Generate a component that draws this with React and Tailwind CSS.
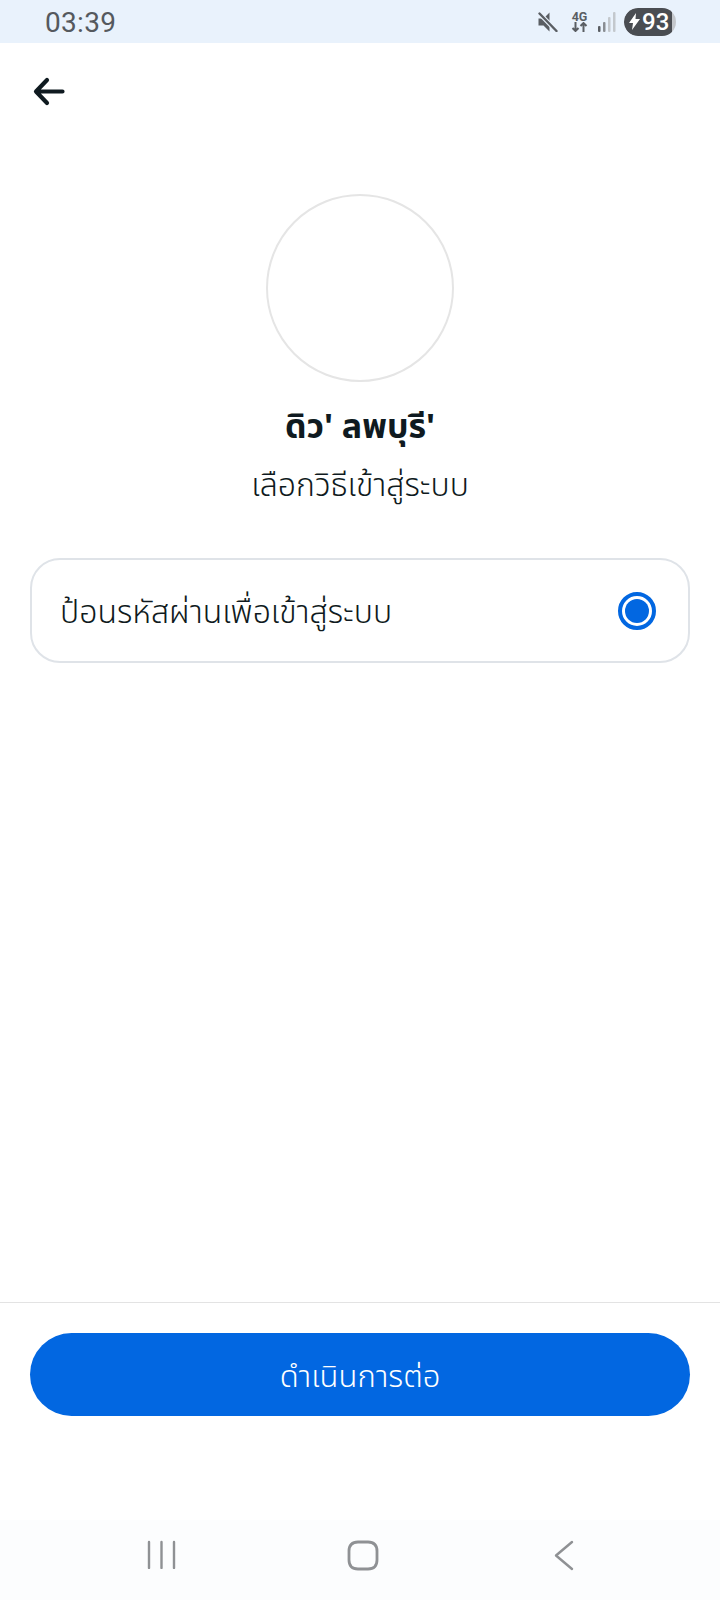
import React from 'react';

const thai = 'font-["Noto_Sans","Noto_Sans_Thai","Liberation_Sans",sans-serif]';

const StatusBar = () => (
  <div className="h-[43px] bg-[#e9f2fc] flex items-center justify-between pl-[45px] pr-[44px] shrink-0">
    <span className='font-["Roboto",sans-serif] text-[28px] leading-none tracking-[0.3px] text-[#55595e] mt-[3px]'>03:39</span>
    <div className="flex items-center">
      {/* mute */}
      <svg width="20" height="20" viewBox="0 0 20 20" fill="#5a5e63">
        <path d="M0.500 6.500h5l6-6v19l-6-6h-5z" />
        <path d="M1.500 1.500 18.500 19" stroke="#e9f2fc" strokeWidth="4.500" />
        <path d="M1.500 1.500 18.500 19" stroke="#5a5e63" strokeWidth="2.400" strokeLinecap="round" />
      </svg>
      {/* 4G */}
      <div className="ml-[13px] w-[17px] flex flex-col items-center text-[#5a5e63]">
        <span className='font-["Roboto",sans-serif] font-bold text-[12.500px] leading-[11px]'>4G</span>
        <svg width="17" height="10" viewBox="0 0 17 10" fill="none" stroke="#5a5e63" strokeWidth="2">
          <path d="M4.500 0v9M1.500 6l3 3 3-3" />
          <path d="M12.500 10V1M9.500 4l3-3 3 3" />
        </svg>
      </div>
      {/* signal */}
      <svg className="ml-[10px]" width="18" height="20" viewBox="0 0 18 20">
        <rect x="0" y="14" width="2.500" height="6" rx="1" fill="#5a5e63" />
        <rect x="5" y="10" width="2.500" height="10" rx="1" fill="#8a8e93" />
        <rect x="10" y="5" width="2.500" height="15" rx="1" fill="#c3c8cd" />
        <rect x="15" y="0" width="2.500" height="20" rx="1" fill="#c3c8cd" />
      </svg>
      {/* battery */}
      <div className="ml-[8px] relative w-[52px] h-[28px] rounded-full bg-[#c4c7cb] overflow-hidden">
        <div className="w-[48px] h-full rounded-l-full bg-[#4a4d52] flex items-center pl-[5px] gap-[2px]">
          <svg width="11" height="17" viewBox="0 0 11 17" fill="#fff">
            <path d="M7 0 0 10h4l-1 7 8-11H6.500z" />
          </svg>
          <span className='font-["Roboto",sans-serif] font-medium text-[24px] leading-none text-white'>93</span>
        </div>
      </div>
    </div>
  </div>
);

const NavBar = () => (
  <div className="h-[80px] bg-[#fcfdfe] shrink-0 relative">
    <div className="h-full flex items-start pt-[20px]">
      <svg className="ml-[147px]" width="29" height="29" viewBox="0 0 29 29" stroke="#8f9194" strokeWidth="2.400" strokeLinecap="round">
        <path d="M2 2v26M14.500 2v26M27 2v26" />
      </svg>
      <svg className="ml-[171px]" width="32" height="31" viewBox="0 0 32 31" fill="none" stroke="#8f9194" strokeWidth="2.800">
        <path d="M11 2h10c6 0 9 3 9 9v9c0 6-3 9-9 9H11c-6 0-9-3-9-9v-9c0-6 3-9 9-9z" />
      </svg>
      <svg className="ml-[174px]" width="22" height="31" viewBox="0 0 22 31" fill="none" stroke="#8f9194" strokeWidth="2.400" strokeLinecap="round" strokeLinejoin="round">
        <path d="M19 2 3 15.500 19 29" />
      </svg>
    </div>
  </div>
);

const App = () => {
  return (
    <div className={`w-[720px] h-[1600px] bg-white flex flex-col text-[#0f1a20] ${thai}`}>
      <StatusBar />

      <div className="flex-1 flex flex-col">
        {/* Back */}
        <div className="h-[96px] pl-[33px] pt-[34px]">
          <svg width="32" height="30" viewBox="0 0 32 30" fill="none" stroke="#0f1a20" strokeWidth="4.200" strokeLinecap="round" strokeLinejoin="round">
            <path d="M29.500 14.500H4M14 3 3 14.500 14 26" />
          </svg>
        </div>

        {/* Avatar */}
        <div className="mt-[55px] flex flex-col items-center">
          <div className="w-[188px] h-[188px] rounded-full border-2 border-[#e5e5e5]" />
          <div className="mt-[21px] text-[34px] leading-[44px] font-bold">ดิว' ลพบุรี'</div>
          <div className="mt-[15px] text-[32px] leading-[44px] font-light">เลือกวิธีเข้าสู่ระบบ</div>
        </div>

        {/* Option */}
        <div className="mt-[52px] mx-[30px] h-[105px] rounded-[30px] border-2 border-[#dfe3e8] flex items-center justify-between pl-[28px] pr-[32px]">
          <span className="text-[32px] leading-[44px] font-light">ป้อนรหัสผ่านเพื่อเข้าสู่ระบบ</span>
          <div className="w-[38px] h-[38px] rounded-full border-[4px] border-[#0267e1] flex items-center justify-center">
            <div className="w-[24px] h-[24px] rounded-full bg-[#0267e1]" />
          </div>
        </div>
      </div>

      {/* Footer */}
      <div className="h-[218px] border-t border-[#e3e3e3] shrink-0 px-[30px] pt-[30px]">
        <button className="w-full h-[83px] rounded-full bg-[#0267e1] text-white text-[31px] leading-[40px] font-light">
          ดำเนินการต่อ
        </button>
      </div>

      <NavBar />
    </div>
  );
};

export default App;
